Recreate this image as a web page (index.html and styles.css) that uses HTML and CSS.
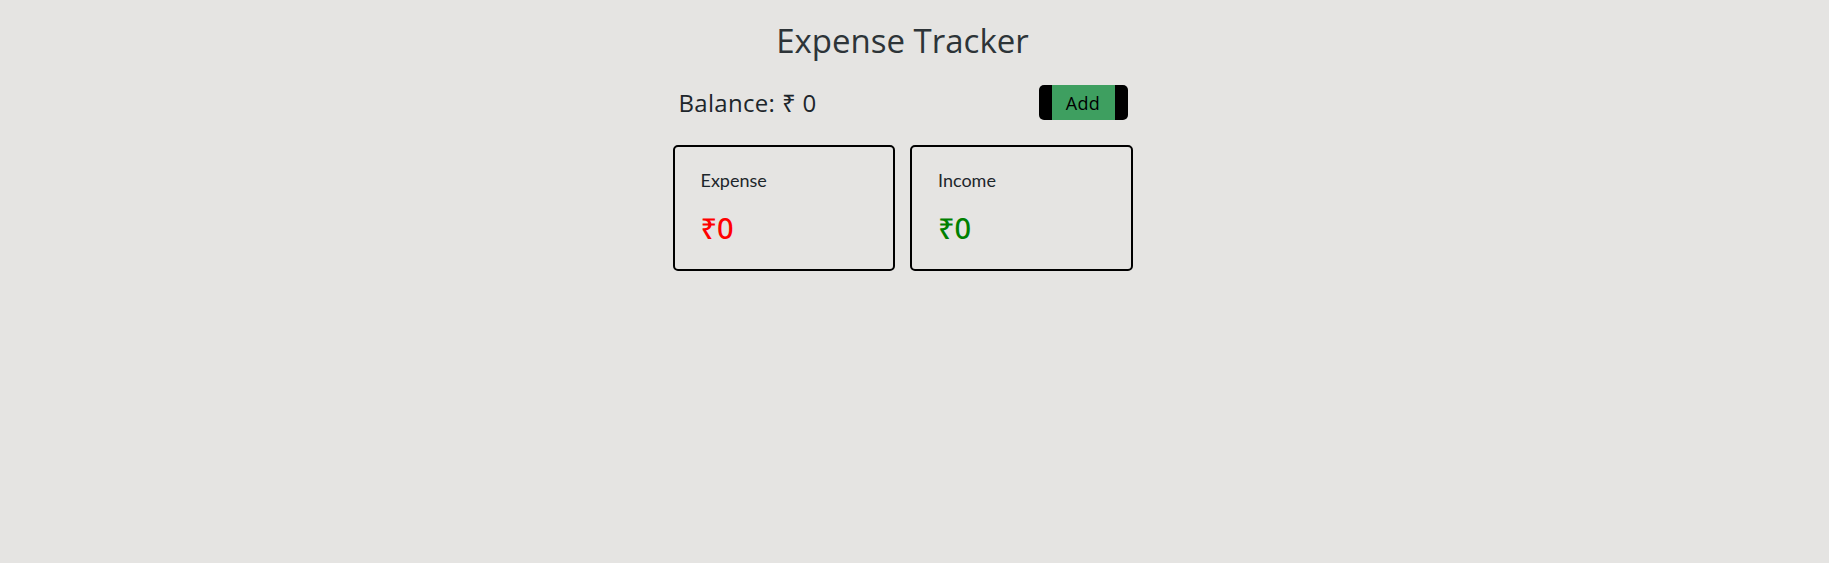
FILE: index.html
```html
<!DOCTYPE html>
<html lang="en">
<head>
<meta charset="utf-8">
<title>Expense Tracker</title>
<link rel="stylesheet" href="styles.css">
</head>
<body>
<div class="app">
  <h1 class="title">Expense Tracker</h1>
  <div class="balance-row">
    <span class="balance">Balance: ₹ 0</span>
    <button class="add-btn">Add</button>
  </div>
  <div class="cards">
    <div class="card">
      <div class="card-label">Expense</div>
      <div class="card-amount expense">₹0</div>
    </div>
    <div class="card">
      <div class="card-label">Income</div>
      <div class="card-amount income">₹0</div>
    </div>
  </div>
</div>
</body>
</html>
```
FILE: styles.css
```css
html, body {
  margin: 0;
  padding: 0;
  background: #e5e4e2;
}
body {
  padding-right: 24px;
  font-family: "Open Sans", "Noto Sans", sans-serif;
  color: #1f2a30;
}
.app {
  width: 460px;
  margin: 0 auto;
  padding-top: 18px;
}
.title {
  margin: 0;
  text-align: center;
  font-family: "Open Sans", sans-serif;
  font-weight: 500;
  font-size: 33px;
  line-height: 46px;
  color: #2d3438;
}
.balance-row {
  display: flex;
  justify-content: space-between;
  align-items: center;
  margin-top: 21px;
  padding: 0 5px 0 6px;
}
.balance {
  font-family: "Open Sans", sans-serif;
  font-weight: 500;
  font-size: 24px;
  letter-spacing: 0.3px;
  color: #1d262b;
}
.add-btn {
  width: 89px;
  height: 35px;
  background: #3e9f60;
  border: none;
  border-left: 13px solid #000;
  border-right: 13px solid #000;
  border-radius: 5px;
  font-family: "Open Sans", sans-serif;
  font-weight: 500;
  font-size: 18px;
  letter-spacing: 0.3px;
  color: #000;
  padding: 0;
}
.cards {
  display: grid;
  grid-template-columns: 1fr 1fr;
  gap: 15px;
  margin-top: 25px;
}
.card {
  height: 126px;
  box-sizing: border-box;
  border: 2px solid #000;
  border-radius: 5px;
  padding: 22px 26px;
}
.card-label {
  font-family: "Lato", sans-serif;
  font-size: 18px;
  color: #1d262b;
}
.card-amount {
  margin-top: 17px;
  font-family: "Noto Sans", sans-serif;
  font-size: 29px;
  font-weight: 500;
}
.expense { color: #ff0000; }
.income { color: #008000; }
```
